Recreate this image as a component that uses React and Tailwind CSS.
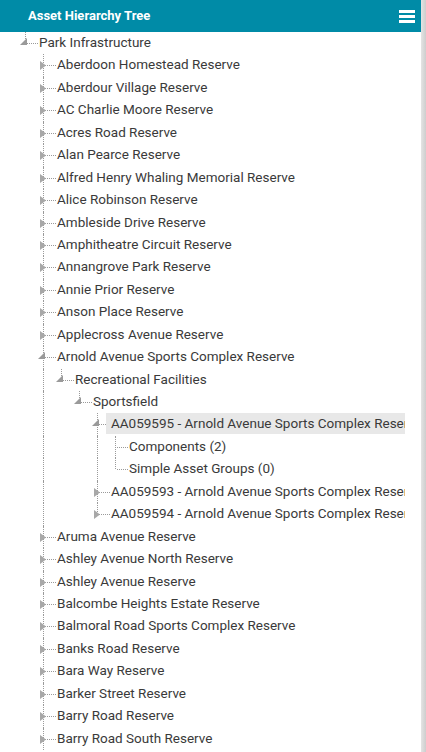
import React from "react";

const collapsed = (names) => names.map((t) => ({ t, kind: "closed" }));

const tree = [
  {
    t: "Park Infrastructure",
    kind: "open",
    more: true,
    children: [
      ...collapsed([
        "Aberdoon Homestead Reserve",
        "Aberdour Village Reserve",
        "AC Charlie Moore Reserve",
        "Acres Road Reserve",
        "Alan Pearce Reserve",
        "Alfred Henry Whaling Memorial Reserve",
        "Alice Robinson Reserve",
        "Ambleside Drive Reserve",
        "Amphitheatre Circuit Reserve",
        "Annangrove Park Reserve",
        "Annie Prior Reserve",
        "Anson Place Reserve",
        "Applecross Avenue Reserve",
      ]),
      {
        t: "Arnold Avenue Sports Complex Reserve",
        kind: "open",
        children: [
          {
            t: "Recreational Facilities",
            kind: "open",
            children: [
              {
                t: "Sportsfield",
                kind: "open",
                children: [
                  {
                    t: "AA059595 - Arnold Avenue Sports Complex Reserve",
                    kind: "open",
                    selected: true,
                    children: [
                      { t: "Components (2)", kind: "leaf" },
                      { t: "Simple Asset Groups (0)", kind: "leaf" },
                    ],
                  },
                  { t: "AA059593 - Arnold Avenue Sports Complex Reserve", kind: "closed" },
                  { t: "AA059594 - Arnold Avenue Sports Complex Reserve", kind: "closed" },
                ],
              },
            ],
          },
        ],
      },
      ...collapsed([
        "Aruma Avenue Reserve",
        "Ashley Avenue North Reserve",
        "Ashley Avenue Reserve",
        "Balcombe Heights Estate Reserve",
        "Balmoral Road Sports Complex Reserve",
        "Banks Road Reserve",
        "Bara Way Reserve",
        "Barker Street Reserve",
        "Barry Road Reserve",
        "Barry Road South Reserve",
      ]),
    ],
  },
];

function flatten(nodes, level, anc, out, more) {
  nodes.forEach((n, i) => {
    const last = i === nodes.length - 1 && !more;
    out.push({ ...n, level, anc, last });
    if (n.kind === "open" && n.children) {
      flatten(n.children, level + 1, [...anc, !last], out, n.more);
    }
  });
  return out;
}

const rows = flatten(tree, 0, [], [], false);

function ClosedIcon() {
  return (
    <svg className="absolute left-[6px] top-[7px]" width="7" height="9" viewBox="0 0 7 9">
      <polygon points="0,0 6,4.5 0,9" fill="#a8a8a8" />
    </svg>
  );
}

function OpenIcon() {
  return (
    <svg className="absolute left-[4px] top-[6px]" width="8" height="8" viewBox="0 0 8 8">
      <polygon points="7,0 7,7 0,7" fill="#9a9a9a" />
    </svg>
  );
}

function Row({ r }) {
  return (
    <div className="flex h-[22.45px] pl-4 whitespace-nowrap">
      {r.anc.map((c, i) => (
        <div key={i} className="relative w-[18px] shrink-0">
          {c && (
            <span className="absolute left-[9px] top-0 bottom-0 border-l border-dotted border-[#9a9a9a]" />
          )}
        </div>
      ))}
      <div className="relative w-[18px] shrink-0">
        {r.last ? (
          <span className="absolute left-[9px] top-0 h-[11px] border-l border-dotted border-[#9a9a9a]" />
        ) : (
          <span className="absolute left-[9px] top-0 bottom-0 border-l border-dotted border-[#9a9a9a]" />
        )}
        <span className="absolute left-[11px] top-[11px] w-[11px] border-t border-dotted border-[#9a9a9a]" />
        {r.kind === "closed" && <ClosedIcon />}
        {r.kind === "open" && <OpenIcon />}
      </div>
      <span
        className={
          r.selected
            ? "relative h-[21px] leading-[21px] pl-[5px] pr-[6px] text-[13.5px] text-[#3a3a3a] bg-[#e8e8e8]"
            : "relative h-[21px] leading-[21px] pl-[5px] pr-[6px] text-[13.5px] text-[#3a3a3a]"
        }
      >
        {r.t}
      </span>
    </div>
  );
}

export default function App() {
  return (
    <div
      className="flex h-[752px] w-[426px] overflow-hidden bg-white"
      style={{ fontFamily: "Roboto, 'Liberation Sans', sans-serif" }}
    >
      <div className="flex w-[421px] shrink-0 flex-col">
        <div className="flex h-[32px] shrink-0 items-center justify-between bg-[#008ba7] pl-[28px] pr-[6px]">
          <span className="text-[13px] font-bold text-white">Asset Hierarchy Tree</span>
          <div className="flex w-[16px] flex-col gap-[2px]">
            <span className="h-[3px] bg-white" />
            <span className="h-[3px] bg-white" />
            <span className="h-[3px] bg-white" />
          </div>
        </div>
        <div className="w-[405px] flex-1 overflow-hidden">
          {rows.map((r, i) => (
            <Row key={i} r={r} />
          ))}
        </div>
      </div>
      <div className="w-[5px] shrink-0 bg-gradient-to-r from-[#e4e4e4] to-[#cdcdcd]" />
    </div>
  );
}
